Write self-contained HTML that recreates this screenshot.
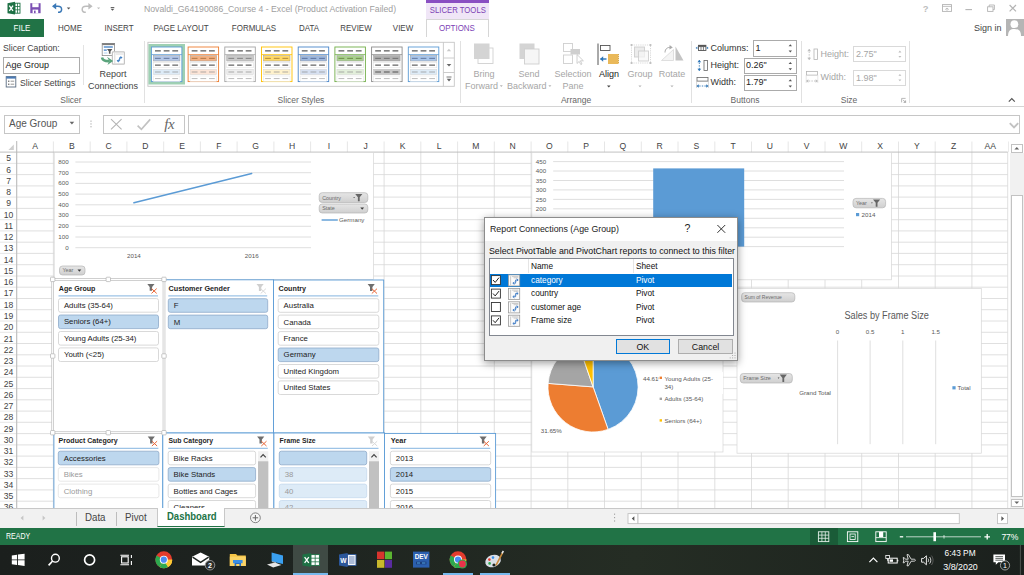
<!DOCTYPE html>
<html><head><meta charset="utf-8"><title>Excel</title>
<style>
*{box-sizing:border-box;margin:0;padding:0}
html,body{width:1024px;height:575px;overflow:hidden;background:#fff;font-family:"Liberation Sans",sans-serif;font-size:9px;color:#444}
.a{position:absolute}
.t{position:absolute;white-space:nowrap;line-height:1}
#title{left:0;top:0;width:1024px;height:19px;background:#fff}
#tabs{left:0;top:19px;width:1024px;height:18px;background:#fff}
#ribbon{left:0;top:37px;width:1024px;height:70px;background:#fff;border-bottom:1px solid #d4d4d4}
#fbar{left:0;top:107px;width:1024px;height:33px;background:#fff}
#grid{left:0;top:140px;width:1024px;height:368px;background:#fff;overflow:hidden}
#sheetbar{left:0;top:508px;width:1024px;height:20px;background:#f1f1f1}
#status{left:0;top:528px;width:1024px;height:17px;background:#217346}
#task{left:0;top:545px;width:1024px;height:30px;background:linear-gradient(90deg,#1b1f1d 0%,#1e2420 30%,#252d24 62%,#1f2620 85%,#1b201d 100%)}
.tab{position:absolute;top:19px;height:18px;line-height:18px;font-size:9.4px;color:#444;text-align:center;transform:scaleX(.85)}
.rl{position:absolute;font-size:9px;color:#444;white-space:nowrap;line-height:1}
.gl{position:absolute;font-size:8.5px;color:#666;white-space:nowrap;text-align:center;line-height:1}
.dl{transform:scaleX(.94);transform-origin:0 0}
.sep{position:absolute;top:41px;width:1px;height:62px;background:#e1e1e1}
</style></head><body>
<!--TITLE-->
<div id="title" class="a">
<svg class="a" style="left:0;top:0" width="130" height="19" viewBox="0 0 130 19">
<!-- excel icon -->
<path d="M7.5 3.2 L15 1.8 V14.6 L7.5 13.2Z" fill="#1e7145"/>
<rect x="15" y="3.2" width="5" height="10" fill="#fff" stroke="#1e7145" stroke-width="0.9"/>
<path d="M15 6.5H20M15 9.8H20M17.5 3.2V13.2" stroke="#1e7145" stroke-width="0.8"/>
<path d="M9.3 5.6 L13 10.9 M13 5.6 L9.3 10.9" stroke="#fff" stroke-width="1.3"/>
<!-- save -->
<path d="M30.3 3.2 H40.6 V13.2 H30.3Z" fill="#7b4fb3"/>
<rect x="32.3" y="3.2" width="6.3" height="4" fill="#fff"/>
<rect x="32.6" y="9.6" width="5.6" height="3.6" fill="#fff"/>
<rect x="34" y="10.6" width="1.6" height="2.6" fill="#7b4fb3"/>
<!-- undo -->
<path d="M53 6.3 H57.8 C60.6 6.3 61.6 8 61.6 9.4 C61.6 11 60.4 12.3 58 12.3" fill="none" stroke="#3b79b7" stroke-width="1.5"/>
<path d="M52 6.3 L56.2 3 V9.6Z" fill="#3b79b7"/>
<path d="M66.8 7.4 H70.4 L68.6 9.4Z" fill="#555"/>
<!-- redo -->
<path d="M90.5 6.3 H86 C83.2 6.3 82.2 8 82.2 9.4 C82.2 11 83.4 12.3 85.8 12.3" fill="none" stroke="#bdbdbd" stroke-width="1.5"/>
<path d="M92.6 6.3 L88.4 3 V9.6Z" fill="#bdbdbd"/>
<path d="M97 7.4 H100.2 L98.6 9.2Z" fill="#bdbdbd"/>
<!-- customize -->
<rect x="110.7" y="7" width="3.6" height="0.9" fill="#555"/>
<path d="M110.6 8.8 H114.4 L112.5 10.8Z" fill="#555"/>
</svg>
<div class="t" style="left:144px;top:5px;font-size:8.7px;color:#a0a0a0">Novaldi_G64190086_Course 4 - Excel (Product Activation Failed)</div>
<div class="a" style="left:426px;top:0;width:63px;height:19px;background:#f0e6f7;border-top:3px solid #8a4fc2"></div>
<div class="t" style="left:426px;width:63px;text-align:center;top:6px;font-size:8.8px;color:#7c3fb5;transform:scaleX(.88)">SLICER TOOLS</div>
<div class="t" style="left:922.8px;top:3.6px;font-size:9.4px;color:#bdbdbd;font-weight:bold">?</div>
<svg class="a" style="left:935px;top:0" width="89" height="19" viewBox="935 0 89 19">
<rect x="942.5" y="4.6" width="9" height="6.8" fill="none" stroke="#b4b4b4" stroke-width="0.9"/><path d="M942.5 6.4H951.5" stroke="#b4b4b4" stroke-width="0.8"/><path d="M945.2 9.6L947 8L948.8 9.6M947 8V10.8" fill="none" stroke="#b4b4b4" stroke-width="0.8"/>
<path d="M965.4 9.6H972" stroke="#b4b4b4" stroke-width="1.1"/>
<rect x="987.6" y="6.8" width="5.4" height="4.6" fill="none" stroke="#b4b4b4" stroke-width="0.9"/><path d="M989.2 6.8V5H994.4V9.6H993" fill="none" stroke="#b4b4b4" stroke-width="0.9"/>
<path d="M1009.6 5L1016 11.4M1016 5L1009.6 11.4" stroke="#b4b4b4" stroke-width="1.2"/>
</svg>
</div>
<!--TABS-->
<div id="tabs" class="a">
<div class="a" style="left:0;top:0;width:44px;height:18px;background:#217346"></div>
<div class="a" style="left:0;top:18px;width:1024px;height:1px;background:#d6d6d6"></div>
<div class="a" style="left:426px;top:0;width:63px;height:19px;background:#fff;border:1px solid #d6d6d6;border-bottom:none"></div>
</div>
<div class="tab" style="left:-18px;width:80px;color:#fff">FILE</div>
<div class="tab" style="left:29.5px;width:80px">HOME</div>
<div class="tab" style="left:78.5px;width:80px">INSERT</div>
<div class="tab" style="left:141px;width:80px">PAGE LAYOUT</div>
<div class="tab" style="left:213.5px;width:80px">FORMULAS</div>
<div class="tab" style="left:269.2px;width:80px">DATA</div>
<div class="tab" style="left:315.8px;width:80px">REVIEW</div>
<div class="tab" style="left:363.2px;width:80px">VIEW</div>
<div class="tab" style="left:417px;width:80px;color:#7c3fb5">OPTIONS</div>
<div class="t" style="left:973.6px;top:23px;font-size:9.4px;color:#444;transform:scaleX(.96);transform-origin:0 0">Sign in</div>
<div class="a" style="left:1006px;top:19px;width:18px;height:17px;background:#b5b5b5"></div>
<svg class="a" style="left:1006px;top:19px" width="18" height="17" viewBox="0 0 18 17"><circle cx="8.4" cy="5.2" r="3.9" fill="#fff"/><path d="M2 17 C2 11.6 4.4 10 8.4 10 C12.4 10 15 11.6 15 17Z" fill="#fff"/></svg>
<!--RIBBON-->
<div id="ribbon" class="a"></div>
<svg class="a" style="left:0;top:0" width="470" height="107" viewBox="0 0 470 107">
<rect x="147.9" y="42.3" width="306.4" height="44" fill="#fff" stroke="#c6c6c6" stroke-width="0.9"/>
<rect x="148.4" y="44" width="36.6" height="40.5" fill="#9fd0b3"/>
<rect x="151.4" y="47.0" width="30.5" height="34.6" fill="#fff" stroke="#5b9bd5" stroke-width="0.9"/>
<path d="M151.4 54.6H181.9" stroke="#5b9bd5" stroke-width="0.8"/>
<rect x="155.0" y="50.45" width="5.8" height="0.9" fill="#1c1c1c"/>
<rect x="163.7" y="50.45" width="5.8" height="0.9" fill="#1c1c1c"/>
<rect x="172.3" y="50.45" width="5.8" height="0.9" fill="#1c1c1c"/>
<rect x="153.4" y="55.6" width="26.5" height="5.4" fill="#b4c7e7" stroke="#9a9a9a" stroke-width="0.5"/>
<rect x="155.0" y="57.85" width="5.8" height="0.9" fill="#5a6f96"/>
<rect x="163.7" y="57.85" width="5.8" height="0.9" fill="#5a6f96"/>
<rect x="172.3" y="57.85" width="5.8" height="0.9" fill="#5a6f96"/>
<rect x="153.4" y="62.4" width="26.5" height="5.4" fill="#fff" stroke="#dcdcdc" stroke-width="0.5"/>
<rect x="155.0" y="64.65" width="5.8" height="0.9" fill="#2a2a2a"/>
<rect x="163.7" y="64.65" width="5.8" height="0.9" fill="#2a2a2a"/>
<rect x="172.3" y="64.65" width="5.8" height="0.9" fill="#2a2a2a"/>
<rect x="153.4" y="69.3" width="26.5" height="5.4" fill="#ddebf7" stroke="#d5d5d5" stroke-width="0.5"/>
<rect x="155.0" y="71.65" width="5.8" height="0.7" fill="#8f8f8f"/>
<rect x="163.7" y="71.65" width="5.8" height="0.7" fill="#8f8f8f"/>
<rect x="172.3" y="71.65" width="5.8" height="0.7" fill="#8f8f8f"/>
<rect x="153.4" y="76.0" width="26.5" height="5.4" fill="#fff" stroke="#e4e4e4" stroke-width="0.5"/>
<rect x="155.0" y="78.35" width="5.8" height="0.7" fill="#a0a0a0"/>
<rect x="163.7" y="78.35" width="5.8" height="0.7" fill="#a0a0a0"/>
<rect x="172.3" y="78.35" width="5.8" height="0.7" fill="#a0a0a0"/>
<rect x="188.1" y="47.0" width="30.5" height="34.6" fill="#fff" stroke="#ed7d31" stroke-width="0.9"/>
<path d="M188.1 54.6H218.6" stroke="#ed7d31" stroke-width="0.8"/>
<rect x="191.7" y="50.45" width="5.8" height="0.9" fill="#1c1c1c"/>
<rect x="200.4" y="50.45" width="5.8" height="0.9" fill="#1c1c1c"/>
<rect x="209.0" y="50.45" width="5.8" height="0.9" fill="#1c1c1c"/>
<rect x="190.1" y="55.6" width="26.5" height="5.4" fill="#f4b183" stroke="#9a9a9a" stroke-width="0.5"/>
<rect x="191.7" y="57.85" width="5.8" height="0.9" fill="#a8703f"/>
<rect x="200.4" y="57.85" width="5.8" height="0.9" fill="#a8703f"/>
<rect x="209.0" y="57.85" width="5.8" height="0.9" fill="#a8703f"/>
<rect x="190.1" y="62.4" width="26.5" height="5.4" fill="#fff" stroke="#dcdcdc" stroke-width="0.5"/>
<rect x="191.7" y="64.65" width="5.8" height="0.9" fill="#2a2a2a"/>
<rect x="200.4" y="64.65" width="5.8" height="0.9" fill="#2a2a2a"/>
<rect x="209.0" y="64.65" width="5.8" height="0.9" fill="#2a2a2a"/>
<rect x="190.1" y="69.3" width="26.5" height="5.4" fill="#fce4d6" stroke="#d5d5d5" stroke-width="0.5"/>
<rect x="191.7" y="71.65" width="5.8" height="0.7" fill="#8f8f8f"/>
<rect x="200.4" y="71.65" width="5.8" height="0.7" fill="#8f8f8f"/>
<rect x="209.0" y="71.65" width="5.8" height="0.7" fill="#8f8f8f"/>
<rect x="190.1" y="76.0" width="26.5" height="5.4" fill="#fff" stroke="#e4e4e4" stroke-width="0.5"/>
<rect x="191.7" y="78.35" width="5.8" height="0.7" fill="#a0a0a0"/>
<rect x="200.4" y="78.35" width="5.8" height="0.7" fill="#a0a0a0"/>
<rect x="209.0" y="78.35" width="5.8" height="0.7" fill="#a0a0a0"/>
<rect x="224.8" y="47.0" width="30.5" height="34.6" fill="#fff" stroke="#a5a5a5" stroke-width="0.9"/>
<path d="M224.8 54.6H255.3" stroke="#a5a5a5" stroke-width="0.8"/>
<rect x="228.4" y="50.45" width="5.8" height="0.9" fill="#1c1c1c"/>
<rect x="237.1" y="50.45" width="5.8" height="0.9" fill="#1c1c1c"/>
<rect x="245.7" y="50.45" width="5.8" height="0.9" fill="#1c1c1c"/>
<rect x="226.8" y="55.6" width="26.5" height="5.4" fill="#c9c9c9" stroke="#9a9a9a" stroke-width="0.5"/>
<rect x="228.4" y="57.85" width="5.8" height="0.9" fill="#7a7a7a"/>
<rect x="237.1" y="57.85" width="5.8" height="0.9" fill="#7a7a7a"/>
<rect x="245.7" y="57.85" width="5.8" height="0.9" fill="#7a7a7a"/>
<rect x="226.8" y="62.4" width="26.5" height="5.4" fill="#fff" stroke="#dcdcdc" stroke-width="0.5"/>
<rect x="228.4" y="64.65" width="5.8" height="0.9" fill="#2a2a2a"/>
<rect x="237.1" y="64.65" width="5.8" height="0.9" fill="#2a2a2a"/>
<rect x="245.7" y="64.65" width="5.8" height="0.9" fill="#2a2a2a"/>
<rect x="226.8" y="69.3" width="26.5" height="5.4" fill="#ededed" stroke="#d5d5d5" stroke-width="0.5"/>
<rect x="228.4" y="71.65" width="5.8" height="0.7" fill="#8f8f8f"/>
<rect x="237.1" y="71.65" width="5.8" height="0.7" fill="#8f8f8f"/>
<rect x="245.7" y="71.65" width="5.8" height="0.7" fill="#8f8f8f"/>
<rect x="226.8" y="76.0" width="26.5" height="5.4" fill="#fff" stroke="#e4e4e4" stroke-width="0.5"/>
<rect x="228.4" y="78.35" width="5.8" height="0.7" fill="#a0a0a0"/>
<rect x="237.1" y="78.35" width="5.8" height="0.7" fill="#a0a0a0"/>
<rect x="245.7" y="78.35" width="5.8" height="0.7" fill="#a0a0a0"/>
<rect x="261.5" y="47.0" width="30.5" height="34.6" fill="#fff" stroke="#ffc000" stroke-width="0.9"/>
<path d="M261.5 54.6H292.0" stroke="#ffc000" stroke-width="0.8"/>
<rect x="265.1" y="50.45" width="5.8" height="0.9" fill="#1c1c1c"/>
<rect x="273.8" y="50.45" width="5.8" height="0.9" fill="#1c1c1c"/>
<rect x="282.4" y="50.45" width="5.8" height="0.9" fill="#1c1c1c"/>
<rect x="263.5" y="55.6" width="26.5" height="5.4" fill="#ffd966" stroke="#9a9a9a" stroke-width="0.5"/>
<rect x="265.1" y="57.85" width="5.8" height="0.9" fill="#a8803a"/>
<rect x="273.8" y="57.85" width="5.8" height="0.9" fill="#a8803a"/>
<rect x="282.4" y="57.85" width="5.8" height="0.9" fill="#a8803a"/>
<rect x="263.5" y="62.4" width="26.5" height="5.4" fill="#fff" stroke="#dcdcdc" stroke-width="0.5"/>
<rect x="265.1" y="64.65" width="5.8" height="0.9" fill="#2a2a2a"/>
<rect x="273.8" y="64.65" width="5.8" height="0.9" fill="#2a2a2a"/>
<rect x="282.4" y="64.65" width="5.8" height="0.9" fill="#2a2a2a"/>
<rect x="263.5" y="69.3" width="26.5" height="5.4" fill="#fff2cc" stroke="#d5d5d5" stroke-width="0.5"/>
<rect x="265.1" y="71.65" width="5.8" height="0.7" fill="#8f8f8f"/>
<rect x="273.8" y="71.65" width="5.8" height="0.7" fill="#8f8f8f"/>
<rect x="282.4" y="71.65" width="5.8" height="0.7" fill="#8f8f8f"/>
<rect x="263.5" y="76.0" width="26.5" height="5.4" fill="#fff" stroke="#e4e4e4" stroke-width="0.5"/>
<rect x="265.1" y="78.35" width="5.8" height="0.7" fill="#a0a0a0"/>
<rect x="273.8" y="78.35" width="5.8" height="0.7" fill="#a0a0a0"/>
<rect x="282.4" y="78.35" width="5.8" height="0.7" fill="#a0a0a0"/>
<rect x="298.2" y="47.0" width="30.5" height="34.6" fill="#fff" stroke="#4a86c9" stroke-width="0.9"/>
<path d="M298.2 54.6H328.7" stroke="#4a86c9" stroke-width="0.8"/>
<rect x="301.8" y="50.45" width="5.8" height="0.9" fill="#1c1c1c"/>
<rect x="310.5" y="50.45" width="5.8" height="0.9" fill="#1c1c1c"/>
<rect x="319.1" y="50.45" width="5.8" height="0.9" fill="#1c1c1c"/>
<rect x="300.2" y="55.6" width="26.5" height="5.4" fill="#9db7dd" stroke="#9a9a9a" stroke-width="0.5"/>
<rect x="301.8" y="57.85" width="5.8" height="0.9" fill="#536a95"/>
<rect x="310.5" y="57.85" width="5.8" height="0.9" fill="#536a95"/>
<rect x="319.1" y="57.85" width="5.8" height="0.9" fill="#536a95"/>
<rect x="300.2" y="62.4" width="26.5" height="5.4" fill="#fff" stroke="#dcdcdc" stroke-width="0.5"/>
<rect x="301.8" y="64.65" width="5.8" height="0.9" fill="#2a2a2a"/>
<rect x="310.5" y="64.65" width="5.8" height="0.9" fill="#2a2a2a"/>
<rect x="319.1" y="64.65" width="5.8" height="0.9" fill="#2a2a2a"/>
<rect x="300.2" y="69.3" width="26.5" height="5.4" fill="#d6e0f1" stroke="#d5d5d5" stroke-width="0.5"/>
<rect x="301.8" y="71.65" width="5.8" height="0.7" fill="#8f8f8f"/>
<rect x="310.5" y="71.65" width="5.8" height="0.7" fill="#8f8f8f"/>
<rect x="319.1" y="71.65" width="5.8" height="0.7" fill="#8f8f8f"/>
<rect x="300.2" y="76.0" width="26.5" height="5.4" fill="#fff" stroke="#e4e4e4" stroke-width="0.5"/>
<rect x="301.8" y="78.35" width="5.8" height="0.7" fill="#a0a0a0"/>
<rect x="310.5" y="78.35" width="5.8" height="0.7" fill="#a0a0a0"/>
<rect x="319.1" y="78.35" width="5.8" height="0.7" fill="#a0a0a0"/>
<rect x="334.9" y="47.0" width="30.5" height="34.6" fill="#fff" stroke="#70ad47" stroke-width="0.9"/>
<path d="M334.9 54.6H365.4" stroke="#70ad47" stroke-width="0.8"/>
<rect x="338.5" y="50.45" width="5.8" height="0.9" fill="#1c1c1c"/>
<rect x="347.2" y="50.45" width="5.8" height="0.9" fill="#1c1c1c"/>
<rect x="355.8" y="50.45" width="5.8" height="0.9" fill="#1c1c1c"/>
<rect x="336.9" y="55.6" width="26.5" height="5.4" fill="#a9d08e" stroke="#9a9a9a" stroke-width="0.5"/>
<rect x="338.5" y="57.85" width="5.8" height="0.9" fill="#66843f"/>
<rect x="347.2" y="57.85" width="5.8" height="0.9" fill="#66843f"/>
<rect x="355.8" y="57.85" width="5.8" height="0.9" fill="#66843f"/>
<rect x="336.9" y="62.4" width="26.5" height="5.4" fill="#fff" stroke="#dcdcdc" stroke-width="0.5"/>
<rect x="338.5" y="64.65" width="5.8" height="0.9" fill="#2a2a2a"/>
<rect x="347.2" y="64.65" width="5.8" height="0.9" fill="#2a2a2a"/>
<rect x="355.8" y="64.65" width="5.8" height="0.9" fill="#2a2a2a"/>
<rect x="336.9" y="69.3" width="26.5" height="5.4" fill="#e2efda" stroke="#d5d5d5" stroke-width="0.5"/>
<rect x="338.5" y="71.65" width="5.8" height="0.7" fill="#8f8f8f"/>
<rect x="347.2" y="71.65" width="5.8" height="0.7" fill="#8f8f8f"/>
<rect x="355.8" y="71.65" width="5.8" height="0.7" fill="#8f8f8f"/>
<rect x="336.9" y="76.0" width="26.5" height="5.4" fill="#fff" stroke="#e4e4e4" stroke-width="0.5"/>
<rect x="338.5" y="78.35" width="5.8" height="0.7" fill="#a0a0a0"/>
<rect x="347.2" y="78.35" width="5.8" height="0.7" fill="#a0a0a0"/>
<rect x="355.8" y="78.35" width="5.8" height="0.7" fill="#a0a0a0"/>
<rect x="371.6" y="47.0" width="30.5" height="34.6" fill="#fff" stroke="#8c8c8c" stroke-width="0.9"/>
<path d="M371.6 54.6H402.1" stroke="#8c8c8c" stroke-width="0.8"/>
<rect x="375.2" y="50.45" width="5.8" height="0.9" fill="#1c1c1c"/>
<rect x="383.9" y="50.45" width="5.8" height="0.9" fill="#1c1c1c"/>
<rect x="392.5" y="50.45" width="5.8" height="0.9" fill="#1c1c1c"/>
<rect x="373.6" y="55.6" width="26.5" height="5.4" fill="#b0b0b0" stroke="#9a9a9a" stroke-width="0.5"/>
<rect x="375.2" y="57.85" width="5.8" height="0.9" fill="#6a6a6a"/>
<rect x="383.9" y="57.85" width="5.8" height="0.9" fill="#6a6a6a"/>
<rect x="392.5" y="57.85" width="5.8" height="0.9" fill="#6a6a6a"/>
<rect x="373.6" y="62.4" width="26.5" height="5.4" fill="#fff" stroke="#dcdcdc" stroke-width="0.5"/>
<rect x="375.2" y="64.65" width="5.8" height="0.9" fill="#2a2a2a"/>
<rect x="383.9" y="64.65" width="5.8" height="0.9" fill="#2a2a2a"/>
<rect x="392.5" y="64.65" width="5.8" height="0.9" fill="#2a2a2a"/>
<rect x="373.6" y="69.3" width="26.5" height="5.4" fill="#c8c8c8" stroke="#bbb" stroke-width="0.5"/>
<rect x="375.2" y="71.65" width="5.8" height="0.7" fill="#222"/>
<rect x="383.9" y="71.65" width="5.8" height="0.7" fill="#222"/>
<rect x="392.5" y="71.65" width="5.8" height="0.7" fill="#222"/>
<rect x="373.6" y="76.0" width="26.5" height="5.4" fill="#fff" stroke="#e4e4e4" stroke-width="0.5"/>
<rect x="375.2" y="78.35" width="5.8" height="0.7" fill="#a0a0a0"/>
<rect x="383.9" y="78.35" width="5.8" height="0.7" fill="#a0a0a0"/>
<rect x="392.5" y="78.35" width="5.8" height="0.7" fill="#a0a0a0"/>
<rect x="408.3" y="47.0" width="30.5" height="34.6" fill="#fff" stroke="#5b9bd5" stroke-width="0.9"/>
<path d="M408.3 54.6H438.8" stroke="#5b9bd5" stroke-width="0.8"/>
<rect x="411.9" y="50.45" width="5.8" height="0.9" fill="#1c1c1c"/>
<rect x="420.6" y="50.45" width="5.8" height="0.9" fill="#1c1c1c"/>
<rect x="429.2" y="50.45" width="5.8" height="0.9" fill="#1c1c1c"/>
<rect x="410.3" y="55.6" width="26.5" height="5.4" fill="#a9c6ea" stroke="#9a9a9a" stroke-width="0.5"/>
<rect x="411.9" y="57.85" width="5.8" height="0.9" fill="#5a6f96"/>
<rect x="420.6" y="57.85" width="5.8" height="0.9" fill="#5a6f96"/>
<rect x="429.2" y="57.85" width="5.8" height="0.9" fill="#5a6f96"/>
<rect x="410.3" y="62.4" width="26.5" height="5.4" fill="#fff" stroke="#dcdcdc" stroke-width="0.5"/>
<rect x="411.9" y="64.65" width="5.8" height="0.9" fill="#2a2a2a"/>
<rect x="420.6" y="64.65" width="5.8" height="0.9" fill="#2a2a2a"/>
<rect x="429.2" y="64.65" width="5.8" height="0.9" fill="#2a2a2a"/>
<rect x="410.3" y="69.3" width="26.5" height="5.4" fill="#ddebf7" stroke="#d5d5d5" stroke-width="0.5"/>
<rect x="411.9" y="71.65" width="5.8" height="0.7" fill="#8f8f8f"/>
<rect x="420.6" y="71.65" width="5.8" height="0.7" fill="#8f8f8f"/>
<rect x="429.2" y="71.65" width="5.8" height="0.7" fill="#8f8f8f"/>
<rect x="410.3" y="76.0" width="26.5" height="5.4" fill="#fff" stroke="#e4e4e4" stroke-width="0.5"/>
<rect x="411.9" y="78.35" width="5.8" height="0.7" fill="#a0a0a0"/>
<rect x="420.6" y="78.35" width="5.8" height="0.7" fill="#a0a0a0"/>
<rect x="429.2" y="78.35" width="5.8" height="0.7" fill="#a0a0a0"/>
<path d="M443.4 42.3V86.3M443.4 58H454.3M443.4 72.5H454.3" stroke="#c6c6c6" stroke-width="0.9" fill="none"/>
<path d="M446.7 51.2H451.1L448.9 48.8Z" fill="#c8c8c8"/>
<path d="M446.7 64H451.3L449 66.6Z" fill="#666"/>
<path d="M446.5 77H451.5" stroke="#666" stroke-width="0.9"/><path d="M446.7 78.8H451.3L449 81.4Z" fill="#666"/>
</svg>
<div class="rl" style="left:3px;top:44px;color:#444;transform:scaleX(.97);transform-origin:0 0">Slicer Caption:</div>
<div class="a" style="left:3px;top:57px;width:77px;height:16.5px;border:1px solid #ababab;background:#fff"></div>
<div class="rl" style="left:5.5px;top:61px;color:#222">Age Group</div>
<svg class="a" style="left:5px;top:75px" width="13" height="14" viewBox="0 0 13 14"><rect x="1.2" y="1.6" width="9.6" height="10.4" fill="#fff" stroke="#5a6b80" stroke-width="0.9"/><rect x="1.2" y="1.6" width="9.6" height="2" fill="#4a7ab5"/><path d="M3 6.2H4.4M3 9.2H4.4" stroke="#444" stroke-width="1"/><path d="M5.6 6.2H9.2M5.6 9.2H9.2" stroke="#8a8a8a" stroke-width="0.9"/></svg>
<div class="rl" style="left:19.5px;top:78.5px;color:#444;transform:scaleX(.96);transform-origin:0 0">Slicer Settings</div>
<div class="a" style="left:82.5px;top:45px;width:1px;height:40px;background:#e3e3e3"></div>
<svg class="a" style="left:98px;top:41px" width="30" height="26" viewBox="98 41 30 26">
<rect x="102.2" y="43.4" width="12.4" height="12.2" fill="#fff" stroke="#8c8c8c" stroke-width="0.8"/>
<rect x="102.2" y="43.2" width="12.4" height="1.9" fill="#7d7d7d"/>
<path d="M103.8 47H112.8" stroke="#3f7fc4" stroke-width="1.3"/><path d="M103.8 50.1H106.8" stroke="#3f7fc4" stroke-width="1.3"/><path d="M103.8 53H107.4" stroke="#b9d3ee" stroke-width="1.1"/>
<path d="M107 49.1H112.4L110.5 51.4V53.8H108.9V51.4Z" fill="#555"/>
<rect x="112.4" y="51.8" width="12" height="12.4" rx="0.8" fill="#fff" stroke="#c4c4c4" stroke-width="1.2"/>
<path d="M114.8 53V63.4M115.8 54H123.4" stroke="#d4d4d4" stroke-width="0.9"/>
<path d="M102 57.4C102.6 60.4 105 61.3 109.4 61.1" fill="none" stroke="#5aa47c" stroke-width="2.6"/><path d="M107 56.8L113.2 61L107.4 65L109.4 61Z" fill="#5aa47c"/>
<path d="M117.4 60.8H119.6V57.6H122" fill="none" stroke="#3f7fc4" stroke-width="1"/><path d="M120.4 56L122.6 57.6L120.4 59.2ZM118.8 59.2L116.6 60.8L118.8 62.4Z" fill="#3f7fc4"/>
</svg>
<div class="rl" style="left:88px;width:50px;text-align:center;top:69.5px">Report</div>
<div class="rl" style="left:83px;width:60px;text-align:center;top:81.5px">Connections</div>
<div class="gl" style="left:51px;width:40px;top:96px">Slicer</div>
<div class="sep" style="left:143.5px"></div>
<div class="gl" style="left:271px;width:60px;top:96px">Slicer Styles</div>
<div class="sep" style="left:459.5px"></div>
<!-- arrange -->
<svg class="a" style="left:460px;top:37px" width="232" height="70" viewBox="460 37 232 70">
<rect x="478" y="48" width="15" height="15.5" fill="#fff" stroke="#d0d0d0" stroke-width="0.9"/>
<rect x="474" y="43.5" width="15.5" height="15.5" fill="#d4d4d4"/>
<rect x="519.5" y="43.5" width="15" height="15.5" fill="#d4d4d4"/>
<rect x="524.5" y="49" width="14.5" height="15" fill="#f6f6f6" stroke="#cfcfcf" stroke-width="0.9"/>
<rect x="563.5" y="43.5" width="9" height="8" fill="#fff" stroke="#cfcfcf" stroke-width="0.9"/>
<rect x="563.5" y="55" width="9" height="8.5" fill="#fff" stroke="#cfcfcf" stroke-width="0.9"/>
<rect x="570.5" y="49" width="9.5" height="5.5" fill="#cfcfcf"/>
<path d="M577 54.5V63.5L579.2 61.4L580.8 64.6L582 64L580.4 60.8H583.4Z" fill="#fff" stroke="#c4c4c4" stroke-width="0.8"/>
<path d="M598 43.5V65" stroke="#555" stroke-width="1"/>
<rect x="600.5" y="45.5" width="9.5" height="5" fill="#fff" stroke="#555" stroke-width="0.9"/>
<rect x="608" y="54" width="10.5" height="10" fill="#eab95a"/>
<path d="M618.5 54V64" stroke="#c99a3a" stroke-width="0.8" stroke-dasharray="1 1"/>
<path d="M600.5 59H606.5" stroke="#2e75b6" stroke-width="1.4"/><path d="M600 59L603.2 56.2V61.8Z" fill="#2e75b6"/>
<rect x="631.5" y="45" width="19" height="18" fill="none" stroke="#cfcfcf" stroke-width="0.8" stroke-dasharray="1.2 1"/>
<rect x="634.5" y="47" width="10" height="10" fill="#ececec" stroke="#cfcfcf" stroke-width="0.9"/>
<rect x="638.5" y="51" width="10" height="10" fill="#f6f6f6" stroke="#cfcfcf" stroke-width="0.9" fill-opacity="0.7"/>
<rect x="630.6" y="44.1" width="1.8" height="1.8" fill="#bbb"/><rect x="649.6" y="44.1" width="1.8" height="1.8" fill="#bbb"/><rect x="630.6" y="62.1" width="1.8" height="1.8" fill="#bbb"/><rect x="649.6" y="62.1" width="1.8" height="1.8" fill="#bbb"/>
<path d="M661.5 60.5H673.5V49.5Z" fill="#f4f4f4" stroke="#d8d8d8" stroke-width="0.8"/>
<path d="M675.5 46.5V60.5H683.5Z" fill="#c4c4c4"/>
<path d="M665 52.5C665 48.5 668 47 671 47.4" fill="none" stroke="#aaa" stroke-width="1"/><path d="M669.6 45L672.8 47.6L669.4 49.6Z" fill="#aaa"/>
<path d="M499.8 85.2H502.8L501.3 86.9Z" fill="#b5b5b5"/>
<path d="M548.4 85.2H551.4L549.9 86.9Z" fill="#b5b5b5"/>
<path d="M607 85.4H610.6L608.8 87.4Z" fill="#444"/>
<path d="M638.4 85.4H641.6L640 87.2Z" fill="#b5b5b5"/>
<path d="M670.4 85.4H673.6L672 87.2Z" fill="#b5b5b5"/>
</svg>
<div class="rl" style="left:464px;width:40px;text-align:center;top:69.5px;color:#a6a6a6">Bring</div>
<div class="rl" style="left:465px;top:81.5px;color:#a6a6a6">Forward</div>
<div class="rl" style="left:509px;width:40px;text-align:center;top:69.5px;color:#a6a6a6">Send</div>
<div class="rl" style="left:507px;top:81.5px;color:#a6a6a6">Backward</div>
<div class="rl" style="left:548px;width:50px;text-align:center;top:69.5px;color:#a6a6a6">Selection</div>
<div class="rl" style="left:548px;width:50px;text-align:center;top:81.5px;color:#a6a6a6">Pane</div>
<div class="rl" style="left:589px;width:40px;text-align:center;top:69.5px;color:#222">Align</div>
<div class="rl" style="left:620px;width:40px;text-align:center;top:69.5px;color:#a6a6a6">Group</div>
<div class="rl" style="left:652px;width:40px;text-align:center;top:69.5px;color:#a6a6a6">Rotate</div>
<div class="gl" style="left:546px;width:60px;top:96px">Arrange</div>
<div class="sep" style="left:690.5px"></div>
<!-- buttons -->
<svg class="a" style="left:693px;top:37px" width="20" height="70" viewBox="693 37 20 70">
<rect x="698.5" y="45.3" width="7.4" height="5.2" fill="#fff" stroke="#555" stroke-width="0.9"/><path d="M698.5 46.6H706M701 46.6V50.5M703.4 46.6V50.5" stroke="#555" stroke-width="0.8"/><rect x="698.5" y="45" width="7.4" height="1.6" fill="#555"/>
<path d="M695.6 47.9L697.4 46.6V49.2Z" fill="#2e75b6"/><path d="M708.6 47.9L706.8 46.6V49.2Z" fill="#2e75b6"/>
<rect x="704" y="60.5" width="3.4" height="10" fill="#fff" stroke="#666" stroke-width="0.8"/>
<path d="M699.3 60V71" stroke="#2e75b6" stroke-width="0.9" stroke-dasharray="1.4 1.2"/><path d="M697.4 62.2L699.3 60L701.2 62.2Z" fill="#2e75b6"/><path d="M697.4 68.8L699.3 71L701.2 68.8Z" fill="#2e75b6"/>
<rect x="697" y="77.5" width="11" height="3.6" fill="#fff" stroke="#666" stroke-width="0.8"/>
<path d="M696.6 86H708.4" stroke="#2e75b6" stroke-width="0.9" stroke-dasharray="1.4 1.2"/><path d="M698.8 84.2L696.6 86L698.8 87.8Z" fill="#2e75b6"/><path d="M706.2 84.2L708.4 86L706.2 87.8Z" fill="#2e75b6"/><path d="M696.6 81V88M708.4 81V88" stroke="#bbb" stroke-width="0.6"/>
</svg>
<div class="rl" style="left:710.5px;top:44px;color:#333">Columns:</div>
<div class="rl" style="left:710.5px;top:60.5px;color:#333">Height:</div>
<div class="rl" style="left:710.5px;top:77.5px;color:#333">Width:</div>
<div class="a" style="left:752.5px;top:39.5px;width:44px;height:17px;border:1px solid #ababab;background:#fff"></div>
<div class="a" style="left:743.5px;top:57.5px;width:53px;height:16.5px;border:1px solid #ababab;background:#fff"></div>
<div class="a" style="left:743.5px;top:74.5px;width:53px;height:16.5px;border:1px solid #ababab;background:#fff"></div>
<div class="rl" style="left:755.5px;top:44px;color:#222">1</div>
<div class="rl" style="left:746px;top:61px;color:#222">0.26"</div>
<div class="rl" style="left:746px;top:78px;color:#222">1.79"</div>
<svg class="a" style="left:786px;top:39px" width="10" height="52" viewBox="786 39 10 52">
<path d="M788.6 46.2H792L790.3 44.2Z M788.6 50.6H792L790.3 52.6Z M788.6 64H792L790.3 62Z M788.6 68.2H792L790.3 70.2Z M788.6 81.2H792L790.3 79.2Z M788.6 85.4H792L790.3 87.4Z" fill="#555"/></svg>
<div class="gl" style="left:715px;width:60px;top:96px">Buttons</div>
<div class="sep" style="left:800.5px"></div>
<!-- size -->
<svg class="a" style="left:803px;top:37px" width="20" height="70" viewBox="803 37 20 70">
<rect x="814" y="49" width="3.4" height="10.5" fill="#fff" stroke="#b5b5b5" stroke-width="0.8"/>
<path d="M809.2 49V60" stroke="#bdbdbd" stroke-width="0.9" stroke-dasharray="1.4 1.2"/><path d="M807.3 51.2L809.2 49L811.1 51.2Z" fill="#bdbdbd"/><path d="M807.3 57.8L809.2 60L811.1 57.8Z" fill="#bdbdbd"/>
<rect x="806.5" y="71.5" width="11" height="3.6" fill="#fff" stroke="#b5b5b5" stroke-width="0.8"/>
<path d="M806.2 81H817.8" stroke="#bdbdbd" stroke-width="0.9" stroke-dasharray="1.4 1.2"/><path d="M808.4 79.2L806.2 81L808.4 82.8Z" fill="#bdbdbd"/><path d="M815.6 79.2L817.8 81L815.6 82.8Z" fill="#bdbdbd"/><path d="M806.2 75V83M817.8 75V83" stroke="#d5d5d5" stroke-width="0.6"/>
</svg>
<div class="rl" style="left:820.5px;top:49.5px;color:#a6a6a6">Height:</div>
<div class="rl" style="left:820.5px;top:72.5px;color:#a6a6a6">Width:</div>
<div class="a" style="left:853px;top:46px;width:53px;height:16px;border:1px solid #d9d9d9;background:#fff"></div>
<div class="a" style="left:853px;top:69.5px;width:53px;height:16px;border:1px solid #d9d9d9;background:#fff"></div>
<div class="rl" style="left:856px;top:50px;color:#a6a6a6">2.75"</div>
<div class="rl" style="left:856px;top:73.5px;color:#a6a6a6">1.98"</div>
<svg class="a" style="left:895px;top:45px" width="12" height="62" viewBox="895 45 12 62">
<path d="M898.4 52.4H901.4L899.9 50.6Z M898.4 56H901.4L899.9 57.8Z M898.4 75.8H901.4L899.9 74Z M898.4 79.4H901.4L899.9 81.2Z" fill="#bdbdbd"/>
<path d="M901.6 102.4V98.4H905.6" fill="none" stroke="#aaa" stroke-width="0.8"/><path d="M903 99.8L905.6 102.4M905.6 100.4V102.4H903.6" fill="none" stroke="#999" stroke-width="0.8"/></svg>
<div class="gl" style="left:829px;width:40px;top:96px">Size</div>
<div class="sep" style="left:908.5px"></div>
<svg class="a" style="left:1006px;top:96px" width="12" height="8" viewBox="0 0 12 8"><path d="M2.8 5.6L5.8 2.6L8.8 5.6" fill="none" stroke="#555" stroke-width="1.2"/></svg>

<!--FBAR-->
<div id="fbar" class="a"></div>
<!--FBAR-CONTENT-->
<div class="a" style="left:4px;top:114.5px;width:76px;height:19px;border:1px solid #c6c6c6;background:#fff"></div>
<div class="t" style="left:9px;top:118.6px;font-size:10px;color:#555">Age Group</div>
<svg class="a" style="left:68px;top:119px" width="30" height="12" viewBox="68 119 30 12"><path d="M69.6 121.8H74.2L71.9 124.4Z" fill="#666"/><path d="M91 120.6v1.1M91 123.4v1.1M91 126.2v1.1" stroke="#999" stroke-width="1"/></svg>
<div class="a" style="left:103px;top:114.5px;width:81.5px;height:19px;border:1px solid #c6c6c6;background:#fff"></div>
<svg class="a" style="left:103px;top:114px" width="82" height="20" viewBox="103 114 82 20">
<path d="M111 119.2L121.6 129.4M121.6 119.2L111 129.4" stroke="#b5b5b5" stroke-width="1.1" fill="none"/>
<path d="M137.6 125.6L141.4 129.4L150.2 119.4" stroke="#c2c2c2" stroke-width="1.6" fill="none"/>
<text x="164.2" y="129.2" font-family="Liberation Serif, serif" font-style="italic" font-size="15" fill="#666" letter-spacing="-0.4">fx</text>
</svg>
<div class="a" style="left:187.5px;top:114.5px;width:832.5px;height:19px;border:1px solid #c6c6c6;background:#fff"></div>
<svg class="a" style="left:1004px;top:118px" width="18" height="14" viewBox="1004 118 18 14"><path d="M1009.8 123.2L1014 127.4L1018.2 123.2" stroke="#c2c2c2" stroke-width="1.9" fill="none"/></svg>

<!--GRID-->
<div id="grid" class="a"></div>
<svg class="a" style="left:0;top:140px" width="1024" height="368" viewBox="0 140 1024 368">
<path d="M16.7 152V508M53.4 152V508M90.2 152V508M126.9 152V508M163.7 152V508M200.4 152V508M237.1 152V508M273.9 152V508M310.6 152V508M347.4 152V508M384.1 152V508M420.8 152V508M457.6 152V508M494.3 152V508M531.1 152V508M567.8 152V508M604.5 152V508M641.3 152V508M678.0 152V508M714.8 152V508M751.5 152V508M788.2 152V508M825.0 152V508M861.7 152V508M898.5 152V508M935.2 152V508M971.9 152V508M1007.7 152V508M16.7 163.4H1007.7M16.7 174.6H1007.7M16.7 185.9H1007.7M16.7 197.1H1007.7M16.7 208.4H1007.7M16.7 219.7H1007.7M16.7 230.9H1007.7M16.7 242.2H1007.7M16.7 253.4H1007.7M16.7 264.7H1007.7M16.7 276.0H1007.7M16.7 287.2H1007.7M16.7 298.5H1007.7M16.7 309.7H1007.7M16.7 321.0H1007.7M16.7 332.3H1007.7M16.7 343.5H1007.7M16.7 354.8H1007.7M16.7 366.0H1007.7M16.7 377.3H1007.7M16.7 388.6H1007.7M16.7 399.8H1007.7M16.7 411.1H1007.7M16.7 422.3H1007.7M16.7 433.6H1007.7M16.7 444.9H1007.7M16.7 456.1H1007.7M16.7 467.4H1007.7M16.7 478.6H1007.7M16.7 489.9H1007.7M16.7 501.2H1007.7M16.7 512.4H1007.7" stroke="#d8d8d8" stroke-width="0.8" fill="none"/>
<path d="M16.7 141.5V152M53.4 141.5V152M90.2 141.5V152M126.9 141.5V152M163.7 141.5V152M200.4 141.5V152M237.1 141.5V152M273.9 141.5V152M310.6 141.5V152M347.4 141.5V152M384.1 141.5V152M420.8 141.5V152M457.6 141.5V152M494.3 141.5V152M531.1 141.5V152M567.8 141.5V152M604.5 141.5V152M641.3 141.5V152M678.0 141.5V152M714.8 141.5V152M751.5 141.5V152M788.2 141.5V152M825.0 141.5V152M861.7 141.5V152M898.5 141.5V152M935.2 141.5V152M971.9 141.5V152M1008.7 141.5V152" stroke="#e0e0e0" stroke-width="0.8" fill="none"/>
<path d="M0 163.4H16.7M0 174.6H16.7M0 185.9H16.7M0 197.1H16.7M0 208.4H16.7M0 219.7H16.7M0 230.9H16.7M0 242.2H16.7M0 253.4H16.7M0 264.7H16.7M0 276.0H16.7M0 287.2H16.7M0 298.5H16.7M0 309.7H16.7M0 321.0H16.7M0 332.3H16.7M0 343.5H16.7M0 354.8H16.7M0 366.0H16.7M0 377.3H16.7M0 388.6H16.7M0 399.8H16.7M0 411.1H16.7M0 422.3H16.7M0 433.6H16.7M0 444.9H16.7M0 456.1H16.7M0 467.4H16.7M0 478.6H16.7M0 489.9H16.7M0 501.2H16.7M0 512.4H16.7" stroke="#e0e0e0" stroke-width="0.8" fill="none"/>
<path d="M0 152.1H1007.7M16.7 141V508" stroke="#b8b8b8" stroke-width="0.9" fill="none"/>
<path d="M13.8 144.6V150H8.4Z" fill="#cfcfcf"/>
<text x="35.1" y="148.8" text-anchor="middle" font-size="8.6" fill="#444">A</text>
<text x="71.8" y="148.8" text-anchor="middle" font-size="8.6" fill="#444">B</text>
<text x="108.6" y="148.8" text-anchor="middle" font-size="8.6" fill="#444">C</text>
<text x="145.3" y="148.8" text-anchor="middle" font-size="8.6" fill="#444">D</text>
<text x="182.0" y="148.8" text-anchor="middle" font-size="8.6" fill="#444">E</text>
<text x="218.8" y="148.8" text-anchor="middle" font-size="8.6" fill="#444">F</text>
<text x="255.5" y="148.8" text-anchor="middle" font-size="8.6" fill="#444">G</text>
<text x="292.2" y="148.8" text-anchor="middle" font-size="8.6" fill="#444">H</text>
<text x="329.0" y="148.8" text-anchor="middle" font-size="8.6" fill="#444">I</text>
<text x="365.7" y="148.8" text-anchor="middle" font-size="8.6" fill="#444">J</text>
<text x="402.5" y="148.8" text-anchor="middle" font-size="8.6" fill="#444">K</text>
<text x="439.2" y="148.8" text-anchor="middle" font-size="8.6" fill="#444">L</text>
<text x="475.9" y="148.8" text-anchor="middle" font-size="8.6" fill="#444">M</text>
<text x="512.7" y="148.8" text-anchor="middle" font-size="8.6" fill="#444">N</text>
<text x="549.4" y="148.8" text-anchor="middle" font-size="8.6" fill="#444">O</text>
<text x="586.2" y="148.8" text-anchor="middle" font-size="8.6" fill="#444">P</text>
<text x="622.9" y="148.8" text-anchor="middle" font-size="8.6" fill="#444">Q</text>
<text x="659.7" y="148.8" text-anchor="middle" font-size="8.6" fill="#444">R</text>
<text x="696.4" y="148.8" text-anchor="middle" font-size="8.6" fill="#444">S</text>
<text x="733.1" y="148.8" text-anchor="middle" font-size="8.6" fill="#444">T</text>
<text x="769.9" y="148.8" text-anchor="middle" font-size="8.6" fill="#444">U</text>
<text x="806.6" y="148.8" text-anchor="middle" font-size="8.6" fill="#444">V</text>
<text x="843.4" y="148.8" text-anchor="middle" font-size="8.6" fill="#444">W</text>
<text x="880.1" y="148.8" text-anchor="middle" font-size="8.6" fill="#444">X</text>
<text x="916.8" y="148.8" text-anchor="middle" font-size="8.6" fill="#444">Y</text>
<text x="953.6" y="148.8" text-anchor="middle" font-size="8.6" fill="#444">Z</text>
<text x="990.3" y="148.8" text-anchor="middle" font-size="8.6" fill="#444">AA</text>
<text x="8.6" y="161.3" text-anchor="middle" font-size="8.6" fill="#444">5</text>
<text x="8.6" y="172.6" text-anchor="middle" font-size="8.6" fill="#444">6</text>
<text x="8.6" y="183.8" text-anchor="middle" font-size="8.6" fill="#444">7</text>
<text x="8.6" y="195.1" text-anchor="middle" font-size="8.6" fill="#444">8</text>
<text x="8.6" y="206.3" text-anchor="middle" font-size="8.6" fill="#444">9</text>
<text x="8.6" y="217.6" text-anchor="middle" font-size="8.6" fill="#444">10</text>
<text x="8.6" y="228.9" text-anchor="middle" font-size="8.6" fill="#444">11</text>
<text x="8.6" y="240.1" text-anchor="middle" font-size="8.6" fill="#444">12</text>
<text x="8.6" y="251.4" text-anchor="middle" font-size="8.6" fill="#444">13</text>
<text x="8.6" y="262.6" text-anchor="middle" font-size="8.6" fill="#444">14</text>
<text x="8.6" y="273.9" text-anchor="middle" font-size="8.6" fill="#444">15</text>
<text x="8.6" y="285.2" text-anchor="middle" font-size="8.6" fill="#444">16</text>
<text x="8.6" y="296.4" text-anchor="middle" font-size="8.6" fill="#444">17</text>
<text x="8.6" y="307.7" text-anchor="middle" font-size="8.6" fill="#444">18</text>
<text x="8.6" y="318.9" text-anchor="middle" font-size="8.6" fill="#444">19</text>
<text x="8.6" y="330.2" text-anchor="middle" font-size="8.6" fill="#444">20</text>
<text x="8.6" y="341.5" text-anchor="middle" font-size="8.6" fill="#444">21</text>
<text x="8.6" y="352.7" text-anchor="middle" font-size="8.6" fill="#444">22</text>
<text x="8.6" y="364.0" text-anchor="middle" font-size="8.6" fill="#444">23</text>
<text x="8.6" y="375.2" text-anchor="middle" font-size="8.6" fill="#444">24</text>
<text x="8.6" y="386.5" text-anchor="middle" font-size="8.6" fill="#444">25</text>
<text x="8.6" y="397.8" text-anchor="middle" font-size="8.6" fill="#444">26</text>
<text x="8.6" y="409.0" text-anchor="middle" font-size="8.6" fill="#444">27</text>
<text x="8.6" y="420.3" text-anchor="middle" font-size="8.6" fill="#444">28</text>
<text x="8.6" y="431.5" text-anchor="middle" font-size="8.6" fill="#444">29</text>
<text x="8.6" y="442.8" text-anchor="middle" font-size="8.6" fill="#444">30</text>
<text x="8.6" y="454.1" text-anchor="middle" font-size="8.6" fill="#444">31</text>
<text x="8.6" y="465.3" text-anchor="middle" font-size="8.6" fill="#444">32</text>
<text x="8.6" y="476.6" text-anchor="middle" font-size="8.6" fill="#444">33</text>
<text x="8.6" y="487.8" text-anchor="middle" font-size="8.6" fill="#444">34</text>
<text x="8.6" y="499.1" text-anchor="middle" font-size="8.6" fill="#444">35</text>
<text x="8.6" y="510.4" text-anchor="middle" font-size="8.6" fill="#444">36</text>
</svg>
<svg class="a" style="left:0;top:140px" width="1024" height="368" viewBox="0 140 1024 368" font-family="Liberation Sans, sans-serif">
<defs><linearGradient id="bg" x1="0" y1="0" x2="0" y2="1"><stop offset="0" stop-color="#e6e6e6"/><stop offset="1" stop-color="#cfcfcf"/></linearGradient></defs>
<rect x="54.2" y="152.6" width="319.3" height="127" fill="#fff" stroke="#d6d6d6" stroke-width="0.7"/>
<text x="68.6" y="163.8" text-anchor="end" font-size="6.2" fill="#595959">800</text>
<text x="68.6" y="174.5" text-anchor="end" font-size="6.2" fill="#595959">700</text>
<text x="68.6" y="185.2" text-anchor="end" font-size="6.2" fill="#595959">600</text>
<text x="68.6" y="195.9" text-anchor="end" font-size="6.2" fill="#595959">500</text>
<text x="68.6" y="206.6" text-anchor="end" font-size="6.2" fill="#595959">400</text>
<text x="68.6" y="217.4" text-anchor="end" font-size="6.2" fill="#595959">300</text>
<text x="68.6" y="228.1" text-anchor="end" font-size="6.2" fill="#595959">200</text>
<text x="68.6" y="238.8" text-anchor="end" font-size="6.2" fill="#595959">100</text>
<text x="68.6" y="249.5" text-anchor="end" font-size="6.2" fill="#595959">0</text>
<path d="M75.4 162.0H311M75.4 172.7H311M75.4 183.4H311M75.4 194.1H311M75.4 204.8H311M75.4 215.6H311M75.4 226.3H311M75.4 237.0H311M75.4 247.7H311" stroke="#d6d6d6" stroke-width="0.8" fill="none"/>
<path d="M133.9 202.7L251.7 173.4" stroke="#5b9bd5" stroke-width="1.5" stroke-linecap="round"/>
<text x="133.9" y="257.8" text-anchor="middle" font-size="6.2" fill="#595959">2014</text>
<text x="251.7" y="257.8" text-anchor="middle" font-size="6.2" fill="#595959">2016</text>
<rect x="59.5" y="266" width="25.5" height="9.0" rx="3" fill="url(#bg)" stroke="#b4b4b4" stroke-width="0.7"/><text x="62.5" y="272.4" font-size="5.4" fill="#6a6a6a">Year</text><path d="M77.5 269.6H81.3L79.4 271.8Z" fill="#3a3a3a"/>
<rect x="319.2" y="192.7" width="48.6" height="9.8" rx="3" fill="url(#bg)" stroke="#b4b4b4" stroke-width="0.7"/><text x="322.2" y="199.5" font-size="5.4" fill="#6a6a6a">Country</text><path d="M355.2 194.0H362.4L359.7 197.2V201.2H357.9V197.2Z" fill="#666"/><path d="M353.2 197.0H355.0L354.1 198.1Z" fill="#444"/>
<rect x="319.2" y="204" width="48.6" height="9.0" rx="3" fill="url(#bg)" stroke="#b4b4b4" stroke-width="0.7"/><text x="322.2" y="210.4" font-size="5.4" fill="#6a6a6a">State</text><path d="M360.3 207.6H364.1L362.2 209.8Z" fill="#3a3a3a"/>
<path d="M321.6 220H337.8" stroke="#5b9bd5" stroke-width="1.4"/>
<text x="339" y="222.3" font-size="6.2" fill="#595959">Germany</text>
<rect x="531.8" y="152.6" width="359.6" height="127.2" fill="#fff" stroke="#d6d6d6" stroke-width="0.7"/>
<text x="546.2" y="163.9" text-anchor="end" font-size="6.2" fill="#595959">450</text>
<text x="546.2" y="173.3" text-anchor="end" font-size="6.2" fill="#595959">400</text>
<text x="546.2" y="182.8" text-anchor="end" font-size="6.2" fill="#595959">350</text>
<text x="546.2" y="192.2" text-anchor="end" font-size="6.2" fill="#595959">300</text>
<text x="546.2" y="201.7" text-anchor="end" font-size="6.2" fill="#595959">250</text>
<text x="546.2" y="211.2" text-anchor="end" font-size="6.2" fill="#595959">200</text>
<text x="546.2" y="220.6" text-anchor="end" font-size="6.2" fill="#595959">150</text>
<text x="546.2" y="230.1" text-anchor="end" font-size="6.2" fill="#595959">100</text>
<text x="546.2" y="239.5" text-anchor="end" font-size="6.2" fill="#595959">50</text>
<text x="546.2" y="248.9" text-anchor="end" font-size="6.2" fill="#595959">0</text>
<path d="M553.2 161.6H844M553.2 171.0H844M553.2 180.5H844M553.2 189.9H844M553.2 199.4H844M553.2 208.8H844M553.2 218.3H844M553.2 227.8H844M553.2 237.2H844M553.2 246.6H844" stroke="#d6d6d6" stroke-width="0.8" fill="none"/>
<rect x="653.2" y="168.4" width="91" height="78.2" fill="#5b9bd5"/>
<text x="698" y="257" text-anchor="middle" font-size="6.2" fill="#595959">Germany</text>
<rect x="853" y="198.4" width="32.6" height="9.4" rx="3" fill="url(#bg)" stroke="#b4b4b4" stroke-width="0.7"/><text x="856" y="205.0" font-size="5.4" fill="#6a6a6a">Year</text><path d="M873.0 199.5H880.2L877.5 202.7V206.7H875.7V202.7Z" fill="#666"/><path d="M871.0 202.5H872.8L871.9 203.6Z" fill="#444"/>
<rect x="856" y="213" width="3.2" height="3.2" fill="#5b9bd5"/>
<text x="861.6" y="216.8" font-size="6.2" fill="#595959">2014</text>
<rect x="531.8" y="288.4" width="191.2" height="163.6" fill="#fff" stroke="#d6d6d6" stroke-width="0.7"/>
<path d="M593.1 386.9L593.1 341.8A45.1 45.1 0 0 1 608.1 429.4Z" fill="#5b9bd5" stroke="#fff" stroke-width="0.8"/>
<path d="M593.1 386.9L608.1 429.4A45.1 45.1 0 0 1 548.1 383.4Z" fill="#ed7d31" stroke="#fff" stroke-width="0.8"/>
<path d="M593.1 386.9L548.1 383.4A45.1 45.1 0 0 1 578.4 344.3Z" fill="#a5a5a5" stroke="#fff" stroke-width="0.8"/>
<path d="M593.1 386.9L578.4 344.3A45.1 45.1 0 0 1 593.1 341.8Z" fill="#ffc000" stroke="#fff" stroke-width="0.8"/>
<text x="643" y="381" font-size="6.2" fill="#555">44.61%</text>
<rect x="659" y="372" width="64" height="22" fill="#fff"/>
<text x="540.8" y="433" font-size="6.2" fill="#555">31.65%</text>
<rect x="659.6" y="376.6" width="2.4" height="2.4" fill="#ed7d31"/>
<text x="664.4" y="380.6" font-size="6.2" fill="#595959">Young Adults (25-</text>
<text x="664.4" y="389" font-size="6.2" fill="#595959">34)</text>
<rect x="659.6" y="397.6" width="2.4" height="2.4" fill="#a5a5a5"/>
<text x="664.4" y="401.4" font-size="6.2" fill="#595959">Adults (35-64)</text>
<rect x="659.6" y="419.2" width="2.4" height="2.4" fill="#ffc000"/>
<text x="664.4" y="423" font-size="6.2" fill="#595959">Seniors (64+)</text>
<rect x="737" y="288.4" width="244.3" height="164.8" fill="#fff" stroke="#d6d6d6" stroke-width="0.7"/>
<rect x="741.6" y="292.7" width="53.2" height="9.3" rx="3" fill="url(#bg)" stroke="#b4b4b4" stroke-width="0.7"/><text x="744.6" y="299.2" font-size="5.0" fill="#6a6a6a">Sum of Revenue</text>
<text x="886.7" y="319" text-anchor="middle" font-size="10" fill="#595959" textLength="84.5" lengthAdjust="spacingAndGlyphs">Sales by Frame Size</text>
<text x="837.6" y="334.1" text-anchor="middle" font-size="6.2" fill="#595959">0</text>
<text x="870.1" y="334.1" text-anchor="middle" font-size="6.2" fill="#595959">0.5</text>
<text x="902.8" y="334.1" text-anchor="middle" font-size="6.2" fill="#595959">1</text>
<text x="935.7" y="334.1" text-anchor="middle" font-size="6.2" fill="#595959">1.5</text>
<path d="M837.6 340.5V444.2M870.1 340.5V444.2M902.8 340.5V444.2M935.7 340.5V444.2" stroke="#d6d6d6" stroke-width="0.8" fill="none"/>
<rect x="740.3" y="373.5" width="52.0" height="9.5" rx="3" fill="url(#bg)" stroke="#b4b4b4" stroke-width="0.7"/><text x="743.3" y="380.1" font-size="5.4" fill="#6a6a6a">Frame Size</text><path d="M779.7 374.6H786.9L784.2 377.9V381.9H782.4V377.9Z" fill="#666"/><path d="M777.7 377.6H779.5L778.6 378.8Z" fill="#444"/>
<text x="831" y="394.6" text-anchor="end" font-size="6.2" fill="#595959">Grand Total</text>
<rect x="952.4" y="386.2" width="3.2" height="3.2" fill="#5b9bd5"/>
<text x="957.6" y="390.1" font-size="6.2" fill="#595959">Total</text>
</svg>
<svg class="a" style="left:0;top:140px" width="1024" height="368" viewBox="0 140 1024 368" font-family="Liberation Sans, sans-serif">
<rect x="53.9" y="432.8" width="108.9" height="87.2" fill="#fff"/>
<rect x="53.9" y="432.8" width="108.9" height="87.2" fill="none" stroke="#5b9bd5" stroke-width="0.9"/>
<text x="58.6" y="443.1" font-size="7.4" font-weight="bold" fill="#1f1f1f" textLength="59.2" lengthAdjust="spacingAndGlyphs">Product Category</text>
<path d="M58.3 448.4H158.4" stroke="#9dc3e6" stroke-width="1.2"/>
<path d="M147.7 436.6H154.9L152.5 439.6V443.4H150.1V439.6Z" fill="#6e6e6e"/><path d="M151.9 441.2L157.1 446.0M157.1 441.2L151.9 446.0" stroke="#e8683a" stroke-width="1" fill="none"/>
<rect x="58.3" y="451.2" width="100.6" height="13.6" rx="2" fill="#bdd7ee" stroke="#8ea9c9" stroke-width="0.8"/>
<text x="63.7" y="460.6" font-size="7.8" fill="#222">Accessories</text>
<rect x="58.3" y="467.6" width="100.6" height="13.6" rx="2" fill="#fff" stroke="#e2e2e2" stroke-width="0.8"/>
<text x="63.7" y="477.0" font-size="7.8" fill="#9a9a9a">Bikes</text>
<rect x="58.3" y="484.1" width="100.6" height="13.6" rx="2" fill="#fff" stroke="#e2e2e2" stroke-width="0.8"/>
<text x="63.7" y="493.5" font-size="7.8" fill="#9a9a9a">Clothing</text>
<rect x="162.8" y="432.8" width="111.1" height="87.2" fill="#fff"/>
<rect x="162.8" y="432.8" width="111.1" height="87.2" fill="none" stroke="#5b9bd5" stroke-width="0.9"/>
<text x="168.5" y="443.1" font-size="7.4" font-weight="bold" fill="#1f1f1f" textLength="44.6" lengthAdjust="spacingAndGlyphs">Sub Category</text>
<path d="M168.2 448.4H267.8" stroke="#9dc3e6" stroke-width="1.2"/>
<path d="M257.1 436.6H264.3L261.9 439.6V443.4H259.5V439.6Z" fill="#6e6e6e"/><path d="M261.3 441.2L266.5 446.0M266.5 441.2L261.3 446.0" stroke="#e8683a" stroke-width="1" fill="none"/>
<rect x="168.2" y="451.2" width="87.4" height="13.6" rx="2" fill="#fff" stroke="#cfcfcf" stroke-width="0.8"/>
<text x="173.6" y="460.6" font-size="7.8" fill="#222">Bike Racks</text>
<rect x="168.2" y="467.6" width="87.4" height="13.6" rx="2" fill="#bdd7ee" stroke="#8ea9c9" stroke-width="0.8"/>
<text x="173.6" y="477.0" font-size="7.8" fill="#222">Bike Stands</text>
<rect x="168.2" y="484.1" width="87.4" height="13.6" rx="2" fill="#fff" stroke="#cfcfcf" stroke-width="0.8"/>
<text x="173.6" y="493.5" font-size="7.8" fill="#222">Bottles and Cages</text>
<rect x="168.2" y="500.5" width="87.4" height="13.6" rx="2" fill="#fff" stroke="#cfcfcf" stroke-width="0.8"/>
<text x="173.6" y="509.9" font-size="7.8" fill="#222">Cleaners</text>
<rect x="258" y="451.2" width="10.3" height="80" fill="#f1f1f1"/>
<rect x="258" y="461.3" width="10.3" height="70" fill="#c1c1c1"/>
<path d="M260.5 457.4L263.1 454.6L265.8 457.4" stroke="#444" stroke-width="1.2" fill="none"/>
<rect x="273.9" y="432.8" width="110.6" height="87.2" fill="#fff"/>
<rect x="273.9" y="432.8" width="110.6" height="87.2" fill="none" stroke="#5b9bd5" stroke-width="0.9"/>
<text x="279.6" y="443.1" font-size="7.4" font-weight="bold" fill="#1f1f1f" textLength="36" lengthAdjust="spacingAndGlyphs">Frame Size</text>
<path d="M279.3 448.4H378.5" stroke="#9dc3e6" stroke-width="1.2"/>
<path d="M367.8 436.6H375.0L372.6 439.6V443.4H370.2V439.6Z" fill="#cfcfcf"/><path d="M372.0 441.2L377.2 446.0M377.2 441.2L372.0 446.0" stroke="#d9d9d9" stroke-width="1" fill="none"/>
<rect x="279.3" y="451.2" width="87.4" height="13.6" rx="2" fill="#bdd7ee" stroke="#8ea9c9" stroke-width="0.8"/>
<rect x="279.3" y="467.6" width="87.4" height="13.6" rx="2" fill="#ddebf7" stroke="#c5d9ee" stroke-width="0.8"/>
<text x="284.7" y="477.0" font-size="7.8" fill="#9a9a9a">38</text>
<rect x="279.3" y="484.1" width="87.4" height="13.6" rx="2" fill="#ddebf7" stroke="#c5d9ee" stroke-width="0.8"/>
<text x="284.7" y="493.5" font-size="7.8" fill="#9a9a9a">40</text>
<rect x="279.3" y="500.5" width="87.4" height="13.6" rx="2" fill="#ddebf7" stroke="#c5d9ee" stroke-width="0.8"/>
<text x="284.7" y="509.9" font-size="7.8" fill="#9a9a9a">42</text>
<rect x="369" y="451.2" width="10.0" height="80" fill="#f1f1f1"/>
<rect x="369" y="461.3" width="10.0" height="70" fill="#c1c1c1"/>
<path d="M371.4 457.4L374.0 454.6L376.6 457.4" stroke="#444" stroke-width="1.2" fill="none"/>
<rect x="384.5" y="433.4" width="111.1" height="86.6" fill="#fff"/>
<rect x="384.5" y="433.4" width="111.1" height="86.6" fill="none" stroke="#5b9bd5" stroke-width="0.9"/>
<text x="390.7" y="443.1" font-size="7.4" font-weight="bold" fill="#1f1f1f" textLength="15.6" lengthAdjust="spacingAndGlyphs">Year</text>
<path d="M390.4 448.4H490.2" stroke="#9dc3e6" stroke-width="1.2"/>
<path d="M479.5 436.6H486.7L484.3 439.6V443.4H481.9V439.6Z" fill="#6e6e6e"/><path d="M483.7 441.2L488.9 446.0M488.9 441.2L483.7 446.0" stroke="#e8683a" stroke-width="1" fill="none"/>
<rect x="390.4" y="451.2" width="100.3" height="13.6" rx="2" fill="#fff" stroke="#cfcfcf" stroke-width="0.8"/>
<text x="395.8" y="460.6" font-size="7.8" fill="#222">2013</text>
<rect x="390.4" y="467.6" width="100.3" height="13.6" rx="2" fill="#bdd7ee" stroke="#8ea9c9" stroke-width="0.8"/>
<text x="395.8" y="477.0" font-size="7.8" fill="#222">2014</text>
<rect x="390.4" y="484.1" width="100.3" height="13.6" rx="2" fill="#fff" stroke="#cfcfcf" stroke-width="0.8"/>
<text x="395.8" y="493.5" font-size="7.8" fill="#222">2015</text>
<rect x="390.4" y="500.5" width="100.3" height="13.6" rx="2" fill="#fff" stroke="#cfcfcf" stroke-width="0.8"/>
<text x="395.8" y="509.9" font-size="7.8" fill="#222">2016</text>
<rect x="164" y="279.8" width="109.5" height="153.0" fill="#fff"/>
<rect x="164" y="279.8" width="109.5" height="153.0" fill="none" stroke="#5b9bd5" stroke-width="0.9"/>
<text x="168.6" y="290.6" font-size="7.4" font-weight="bold" fill="#1f1f1f" textLength="61.2" lengthAdjust="spacingAndGlyphs">Customer Gender</text>
<path d="M168.3 295.9H267.2" stroke="#9dc3e6" stroke-width="1.2"/>
<path d="M256.5 284.1H263.7L261.3 287.1V290.9H258.9V287.1Z" fill="#cfcfcf"/><path d="M260.7 288.7L265.9 293.5M265.9 288.7L260.7 293.5" stroke="#d9d9d9" stroke-width="1" fill="none"/>
<rect x="168.3" y="298.7" width="99.4" height="13.6" rx="2" fill="#bdd7ee" stroke="#8ea9c9" stroke-width="0.8"/>
<text x="173.7" y="308.1" font-size="7.8" fill="#222">F</text>
<rect x="168.3" y="315.1" width="99.4" height="13.6" rx="2" fill="#bdd7ee" stroke="#8ea9c9" stroke-width="0.8"/>
<text x="173.7" y="324.5" font-size="7.8" fill="#222">M</text>
<rect x="273.5" y="280" width="110.2" height="152.8" fill="#fff"/>
<rect x="273.5" y="280" width="110.2" height="152.8" fill="none" stroke="#5b9bd5" stroke-width="0.9"/>
<text x="278.5" y="290.6" font-size="7.4" font-weight="bold" fill="#1f1f1f" textLength="27.6" lengthAdjust="spacingAndGlyphs">Country</text>
<path d="M278.2 295.9H378.3" stroke="#9dc3e6" stroke-width="1.2"/>
<path d="M367.6 284.1H374.8L372.4 287.1V290.9H370.0V287.1Z" fill="#6e6e6e"/><path d="M371.8 288.7L377.0 293.5M377.0 288.7L371.8 293.5" stroke="#e8683a" stroke-width="1" fill="none"/>
<rect x="278.2" y="298.7" width="100.6" height="13.6" rx="2" fill="#fff" stroke="#cfcfcf" stroke-width="0.8"/>
<text x="283.6" y="308.1" font-size="7.8" fill="#222">Australia</text>
<rect x="278.2" y="315.1" width="100.6" height="13.6" rx="2" fill="#fff" stroke="#cfcfcf" stroke-width="0.8"/>
<text x="283.6" y="324.5" font-size="7.8" fill="#222">Canada</text>
<rect x="278.2" y="331.6" width="100.6" height="13.6" rx="2" fill="#fff" stroke="#cfcfcf" stroke-width="0.8"/>
<text x="283.6" y="341.0" font-size="7.8" fill="#222">France</text>
<rect x="278.2" y="348.0" width="100.6" height="13.6" rx="2" fill="#bdd7ee" stroke="#8ea9c9" stroke-width="0.8"/>
<text x="283.6" y="357.4" font-size="7.8" fill="#222">Germany</text>
<rect x="278.2" y="364.5" width="100.6" height="13.6" rx="2" fill="#fff" stroke="#cfcfcf" stroke-width="0.8"/>
<text x="283.6" y="373.9" font-size="7.8" fill="#222">United Kingdom</text>
<rect x="278.2" y="380.9" width="100.6" height="13.6" rx="2" fill="#fff" stroke="#cfcfcf" stroke-width="0.8"/>
<text x="283.6" y="390.3" font-size="7.8" fill="#222">United States</text>
<rect x="52.7" y="279.4" width="111.3" height="153.3" fill="#fff"/>
<text x="58.8" y="290.5" font-size="7.4" font-weight="bold" fill="#1f1f1f" textLength="36.6" lengthAdjust="spacingAndGlyphs">Age Group</text>
<path d="M58.5 295.8H158.0" stroke="#9dc3e6" stroke-width="1.2"/>
<path d="M147.3 284.0H154.5L152.1 287.0V290.8H149.7V287.0Z" fill="#6e6e6e"/><path d="M151.5 288.6L156.7 293.4M156.7 288.6L151.5 293.4" stroke="#e8683a" stroke-width="1" fill="none"/>
<rect x="58.5" y="298.6" width="100.0" height="13.6" rx="2" fill="#fff" stroke="#cfcfcf" stroke-width="0.8"/>
<text x="63.9" y="308.0" font-size="7.8" fill="#222">Adults (35-64)</text>
<rect x="58.5" y="315.0" width="100.0" height="13.6" rx="2" fill="#bdd7ee" stroke="#8ea9c9" stroke-width="0.8"/>
<text x="63.9" y="324.4" font-size="7.8" fill="#222">Seniors (64+)</text>
<rect x="58.5" y="331.5" width="100.0" height="13.6" rx="2" fill="#fff" stroke="#cfcfcf" stroke-width="0.8"/>
<text x="63.9" y="340.9" font-size="7.8" fill="#222">Young Adults (25-34)</text>
<rect x="58.5" y="347.9" width="100.0" height="13.6" rx="2" fill="#fff" stroke="#cfcfcf" stroke-width="0.8"/>
<text x="63.9" y="357.3" font-size="7.8" fill="#222">Youth (&lt;25)</text>
<rect x="52.7" y="279.4" width="111.3" height="153.3" fill="none" stroke="#bdbdbd" stroke-width="2.6"/>
<rect x="52.7" y="279.4" width="111.3" height="153.3" fill="none" stroke="#fff" stroke-width="1.2"/>
<rect x="50.5" y="277.2" width="4.4" height="4.4" rx="0.8" fill="#fff" stroke="#b0b0b0" stroke-width="0.7"/>
<rect x="50.5" y="353.8" width="4.4" height="4.4" rx="0.8" fill="#fff" stroke="#b0b0b0" stroke-width="0.7"/>
<rect x="50.5" y="430.5" width="4.4" height="4.4" rx="0.8" fill="#fff" stroke="#b0b0b0" stroke-width="0.7"/>
<rect x="106.1" y="277.2" width="4.4" height="4.4" rx="0.8" fill="#fff" stroke="#b0b0b0" stroke-width="0.7"/>
<rect x="106.1" y="430.5" width="4.4" height="4.4" rx="0.8" fill="#fff" stroke="#b0b0b0" stroke-width="0.7"/>
<rect x="161.8" y="277.2" width="4.4" height="4.4" rx="0.8" fill="#fff" stroke="#b0b0b0" stroke-width="0.7"/>
<rect x="161.8" y="353.8" width="4.4" height="4.4" rx="0.8" fill="#fff" stroke="#b0b0b0" stroke-width="0.7"/>
<rect x="161.8" y="430.5" width="4.4" height="4.4" rx="0.8" fill="#fff" stroke="#b0b0b0" stroke-width="0.7"/>
</svg>
<!--SCROLLBARS-->
<div class="a" style="left:1008.5px;top:140px;width:16px;height:368px;background:#fff"></div><div class="a" style="left:1010px;top:153px;width:14px;height:355px;background:#f1f1f1"></div>
<div class="a" style="left:1011px;top:143.5px;width:11.5px;height:9.5px;background:#fff;border:1px solid #c2c2c2"></div>
<div class="a" style="left:1010.5px;top:194.5px;width:12.5px;height:302px;background:#fff;border:1px solid #c2c2c2"></div>
<div class="a" style="left:1011px;top:498.5px;width:11.5px;height:8.5px;background:#fff;border:1px solid #c2c2c2"></div>
<svg class="a" style="left:1009px;top:140px" width="15" height="368" viewBox="1009 140 15 368"><path d="M1014.4 149.6H1019.2L1016.8 147Z" fill="#666"/><path d="M1014.4 501.4H1019.2L1016.8 504Z" fill="#666"/></svg>

<!--SHEETBAR-->
<div id="sheetbar" class="a">
<div class="a" style="left:0;top:0;width:1024px;height:1px;background:#c8c8c8"></div>
<div class="a" style="left:157px;top:0;width:67.5px;height:18.5px;background:#fff;border-bottom:1.6px solid #217346;border-left:1px solid #c8c8c8;border-right:1px solid #c8c8c8"></div>
<div class="a" style="left:75.5px;top:4px;width:1px;height:14px;background:#bdbdbd"></div>
<div class="a" style="left:115.5px;top:4px;width:1px;height:14px;background:#bdbdbd"></div>
<div class="t" style="left:84.5px;top:4.2px;font-size:10.8px;color:#444;transform:scaleX(.9);transform-origin:0 0">Data</div>
<div class="t" style="left:124.5px;top:4.2px;font-size:10.8px;color:#444;transform:scaleX(.9);transform-origin:0 0">Pivot</div>
<div class="t" style="left:166.5px;top:4.2px;font-size:10.4px;color:#217346;font-weight:bold;transform:scaleX(.915);transform-origin:0 0">Dashboard</div>
<svg class="a" style="left:0;top:0" width="1024" height="20" viewBox="0 508 1024 20">
<path d="M23.4 515.6V520.4L20.6 518Z" fill="#c6c6c6"/><path d="M42.6 515.6V520.4L45.4 518Z" fill="#c6c6c6"/>
<circle cx="255.4" cy="517.8" r="4.9" fill="#f6f6f6" stroke="#777" stroke-width="0.9"/><path d="M252.6 517.8H258.2M255.4 515V520.6" stroke="#666" stroke-width="1"/>
<path d="M614.6 513.6v1.2M614.6 517v1.2M614.6 520.4v1.2" stroke="#999" stroke-width="1"/>
<rect x="628" y="513.6" width="10" height="10" fill="#fff" stroke="#c2c2c2" stroke-width="0.9"/><path d="M634.4 516.2V521L631.8 518.6Z" fill="#555"/>
<rect x="638" y="513.6" width="321.3" height="10" fill="#fff" stroke="#c2c2c2" stroke-width="0.9"/>
<rect x="997.5" y="513.6" width="10" height="10" fill="#fff" stroke="#c2c2c2" stroke-width="0.9"/><path d="M1001.4 516.2V521L1004 518.6Z" fill="#555"/>
</svg>
</div>

<!--STATUS-->
<div id="status" class="a">
<div class="t" style="left:5.5px;top:4.4px;font-size:8.8px;color:#fff;transform:scaleX(.8);transform-origin:0 0">READY</div>
<div class="a" style="left:810px;top:0;width:28px;height:17px;background:#1a5c38"></div>
<svg class="a" style="left:800px;top:0" width="224" height="17" viewBox="800 528 224 17">
<rect x="818.4" y="531.8" width="10.4" height="9.8" fill="none" stroke="#e6efe9" stroke-width="0.9"/><path d="M821.9 531.8V541.6M825.3 531.8V541.6M818.4 535.1H828.8M818.4 538.3H828.8" stroke="#e6efe9" stroke-width="0.8"/>
<rect x="847.4" y="531.8" width="10.4" height="9.8" fill="none" stroke="#fff" stroke-width="0.9"/><rect x="850" y="534" width="5.2" height="5.4" fill="none" stroke="#fff" stroke-width="0.8"/><path d="M851.4 536.6H854" stroke="#fff" stroke-width="0.8"/>
<rect x="875.8" y="531.8" width="10.4" height="9.8" fill="none" stroke="#fff" stroke-width="0.9"/><rect x="879" y="531.8" width="4.2" height="5.2" fill="#fff"/><path d="M875.8 537.6H886.2" stroke="#fff" stroke-width="0.8"/>
<path d="M899.8 536.8H903.2" stroke="#fff" stroke-width="1.3"/>
<path d="M906 536.8H981" stroke="#fff" stroke-width="0.7"/><path d="M944 535V538.6" stroke="#fff" stroke-width="0.7"/>
<rect x="933.4" y="532.2" width="2.6" height="9" fill="#fff"/>
<path d="M984.4 536.8H990M987.2 534V539.6" stroke="#fff" stroke-width="1.3"/>
</svg>
<div class="t" style="left:1001.5px;top:4.5px;font-size:8.6px;color:#fff;letter-spacing:-0.2px">77%</div>
</div>

<!--TASK-->
<div id="task" class="a">
<div class="a" style="left:293px;top:0;width:34.5px;height:30px;background:#3f4a44"></div>
<div class="a" style="left:293px;top:28px;width:34.5px;height:2px;background:#76b9ed"></div>
<div class="a" style="left:443px;top:28px;width:30px;height:2px;background:#76b9ed"></div>
<div class="a" style="left:480px;top:28px;width:30px;height:2px;background:#76b9ed"></div>
<svg class="a" style="left:0;top:0" width="1024" height="30" viewBox="0 545 1024 30" font-family="Liberation Sans, sans-serif">
<!-- start -->
<path d="M11.8 555.4L17 554.7V559.4H11.8ZM17.9 554.6L24.6 553.7V559.4H17.9ZM11.8 560.3H17V565L11.8 564.3ZM17.9 560.3H24.6V566L17.9 565.1Z" fill="#fff"/>
<!-- search -->
<circle cx="55.4" cy="558.2" r="3.9" fill="none" stroke="#fff" stroke-width="1.4"/><path d="M52.6 561L48.6 565.4" stroke="#fff" stroke-width="1.6"/>
<!-- cortana -->
<circle cx="89.6" cy="559.9" r="5" fill="none" stroke="#fff" stroke-width="1.7"/>
<!-- task view -->
<rect x="121.6" y="556.8" width="6.6" height="6.2" fill="none" stroke="#fff" stroke-width="1.1"/><path d="M120.4 555.2H129M120.4 564.8H129M131.4 555V558M131.4 561V565" stroke="#fff" stroke-width="1.1"/>
<!-- chrome -->
<circle cx="163.8" cy="559.7" r="8.4" fill="#e33b2e"/>
<path d="M163.8 559.7L156.5 555.5A8.4 8.4 0 0 0 159.6 567Z" fill="#2da94f"/>
<path d="M163.8 559.7L159.6 567A8.4 8.4 0 0 0 172.2 559.7Z" fill="#fcc934"/>
<path d="M163.8 559.7L159.6 567A8.4 8.4 0 0 0 168 566.97L163.8 559.7Z" fill="#2da94f"/>
<path d="M163.8 559.7H172.2A8.4 8.4 0 0 1 168 566.97Z" fill="#fcc934"/>
<circle cx="163.8" cy="559.7" r="4" fill="#fff"/><circle cx="163.8" cy="559.7" r="3.1" fill="#4a8af4"/>
<!-- mail -->
<path d="M192 556.8L200.6 552.6L209.2 556.8V565.6H192Z" fill="#fff"/><path d="M192.6 557.2L200.6 562.4L208.6 557.2" fill="none" stroke="#1d2420" stroke-width="1.5"/>
<circle cx="210" cy="565.2" r="4.8" fill="#2c2f2d" stroke="#9a9a9a" stroke-width="0.9"/><text x="210" y="567.6" text-anchor="middle" font-size="7" font-weight="bold" fill="#fff">2</text>
<!-- explorer -->
<path d="M229.8 554H236L237.4 555.6H245.8V566H229.8Z" fill="#f6c445"/><rect x="229.8" y="556.6" width="16" height="9.4" fill="#fad366"/><rect x="233" y="560" width="9.6" height="3.2" fill="#3a8ee6"/><rect x="234.6" y="563" width="6.4" height="3" fill="#2a6fc2"/><rect x="236.2" y="564" width="3.2" height="2" fill="#fad366"/>
<!-- computer -->
<path d="M271.6 552.6L283 555.4V564L271.6 561.4Z" fill="#3aa0f0"/><path d="M267 564.6L275 562.6L281.4 565L273.2 567.4Z" fill="#e6e6e6"/><path d="M272 561.6L276 562.6" stroke="#bbb" stroke-width="0.8"/>
<!-- excel -->
<path d="M302.4 554.6L311 553V567L302.4 565.4Z" fill="#1e7145"/><rect x="311" y="554.6" width="8.4" height="10.8" fill="#fff" stroke="#1e7145" stroke-width="0.9"/><path d="M311 558.2H319.4M311 561.8H319.4M315.2 554.6V565.4" stroke="#1e7145" stroke-width="0.8"/><path d="M304.6 557.2L308.8 562.8M308.8 557.2L304.6 562.8" stroke="#fff" stroke-width="1.3"/>
<!-- word -->
<path d="M339 554.6L347.6 553V567L339 565.4Z" fill="#2b579a"/><rect x="347.6" y="554.6" width="8.4" height="10.8" fill="#fff" stroke="#2b579a" stroke-width="0.9"/><path d="M349 557H354.6M349 559H354.6M349 561H354.6M349 563H354.6" stroke="#2b579a" stroke-width="0.8"/><text x="343.3" y="562.6" text-anchor="middle" font-size="6.6" font-weight="bold" fill="#fff">W</text>
<!-- colored -->
<rect x="377" y="551.6" width="7.4" height="7.6" fill="#d8342e"/><rect x="385" y="551.6" width="7" height="7.6" fill="#5bb531"/><rect x="377" y="560" width="7.4" height="7.8" fill="#c9b82c"/><rect x="385" y="560" width="7" height="7.8" fill="#5a2ca0"/>
<!-- dev -->
<rect x="413" y="551.6" width="16.4" height="16" fill="#2b5fae"/><text x="421.2" y="558.8" text-anchor="middle" font-size="6.4" font-weight="bold" fill="#fff">DEV</text><path d="M416 563H426.4" stroke="#1c3f7a" stroke-width="2.6"/><path d="M417 563H420M422 563H425.4" stroke="#4fa3e8" stroke-width="1.2"/>
<!-- chrome 2 -->
<circle cx="458" cy="559.6" r="8.4" fill="#e33b2e"/>
<path d="M458 559.6L450.7 555.4A8.4 8.4 0 0 0 453.8 566.9Z" fill="#2da94f"/>
<path d="M458 559.6L453.8 566.9A8.4 8.4 0 0 0 466.4 559.6Z" fill="#fcc934"/>
<path d="M458 559.6L453.8 566.9A8.4 8.4 0 0 0 462.2 566.87Z" fill="#2da94f"/>
<circle cx="458" cy="559.6" r="4" fill="#fff"/><circle cx="458" cy="559.6" r="3.1" fill="#4a8af4"/>
<circle cx="462.4" cy="564" r="4.6" fill="#2da94f"/><circle cx="462.4" cy="564" r="3.4" fill="#e8334a"/>
<!-- paint -->
<ellipse cx="493" cy="561" rx="8" ry="6" fill="#d9dfe6" transform="rotate(-20 493 561)"/><circle cx="489.4" cy="559.6" r="1.3" fill="#e33b2e"/><circle cx="493" cy="557.6" r="1.3" fill="#3a8ee6"/><circle cx="489.6" cy="563.4" r="1.3" fill="#2da94f"/><circle cx="494" cy="565" r="1.6" fill="#1d2420"/><path d="M496 565.4L502.6 552.6" stroke="#c98a3c" stroke-width="1.6"/><path d="M502 553.4L503.4 551" stroke="#eee" stroke-width="1.6"/>
<!-- tray -->
<path d="M869.4 562.2L873.4 558.2L877.4 562.2" fill="none" stroke="#fff" stroke-width="1.2"/>
<rect x="888.2" y="558.2" width="9" height="4.8" fill="none" stroke="#fff" stroke-width="1"/><path d="M897.8 559.8V561.4" stroke="#fff" stroke-width="1"/><rect x="885.8" y="555.6" width="3.6" height="3" fill="#1d2420" stroke="#fff" stroke-width="0.8"/><path d="M887.6 558.6V560.6H888.4" stroke="#fff" stroke-width="0.8" fill="none"/><rect x="889.6" y="559.4" width="3.4" height="2.4" fill="#fff"/>
<path d="M915.4 560.2C915.4 559.6 914.6 559.2 913.8 559.2H911.2L908.4 554.6H907L908.2 559.2H905.4L904.2 557.6H903.2L903.8 560.2L903.2 562.8H904.2L905.4 561.2H908.2L907 565.8H908.4L911.2 561.2H913.8C914.6 561.2 915.4 560.8 915.4 560.2Z" fill="none" stroke="#fff" stroke-width="0.8" stroke-linejoin="round"/>
<path d="M921.6 558.4H923.6L926.4 555.8V564.8L923.6 562.2H921.6Z" fill="none" stroke="#fff" stroke-width="0.9"/><path d="M928 558.6C928.8 559.6 928.8 561 928 562M929.6 557C931.2 558.8 931.2 561.8 929.6 563.6" fill="none" stroke="#fff" stroke-width="0.8"/><path d="M931.4 555.6C933.6 558.2 933.6 562.4 931.4 565" fill="none" stroke="#6a6a6a" stroke-width="0.8"/>
<text x="944.6" y="556.4" font-size="9.4" fill="#fff" textLength="31" lengthAdjust="spacingAndGlyphs">6:43 PM</text>
<text x="943.3" y="569.6" font-size="9.4" fill="#fff" textLength="34.5" lengthAdjust="spacingAndGlyphs">3/8/2020</text>
<path d="M993.4 554.4H1005V562.2H998.4L995.8 564.8V562.2H993.4Z" fill="#fff"/><path d="M995.4 556.6H1003M995.4 558.4H1003M995.4 560.2H1003" stroke="#1d2420" stroke-width="0.7"/>
<circle cx="1005" cy="565.4" r="4.6" fill="#1d2420" stroke="#bbb" stroke-width="0.8"/><text x="1005" y="568" text-anchor="middle" font-size="7" fill="#fff">1</text>
<path d="M1020.4 545V575" stroke="#5a5f5c" stroke-width="0.8"/>
</svg>
</div>

<!--DIALOG-->
<div class="a" style="left:483.5px;top:217px;width:254.5px;height:144.3px;background:#f0f0f0;border:1px solid #8c8c8c;box-shadow:0 2px 8px rgba(0,0,0,0.4)"></div>
<div class="a" style="left:484.5px;top:218px;width:252.5px;height:22.5px;background:#fff"></div>
<div class="t" style="left:489.5px;top:224px;font-size:9.4px;color:#222;transform:scaleX(.94);transform-origin:0 0">Report Connections (Age Group)</div>
<div class="t" style="left:684.6px;top:222.6px;font-size:10.6px;color:#222">?</div>
<svg class="a" style="left:714px;top:222px" width="14" height="14" viewBox="714 222 14 14"><path d="M717.4 225L725.2 232.8M725.2 225L717.4 232.8" stroke="#333" stroke-width="1"/></svg>
<div class="t" style="left:489px;top:246.5px;font-size:8.8px;color:#111">Select PivotTable and PivotChart reports to connect to this filter</div>
<div class="a" style="left:488.5px;top:257.5px;width:245.5px;height:78px;background:#fff;border:1px solid #828790"></div>
<div class="a" style="left:527.5px;top:258.5px;width:1px;height:14.5px;background:#e5e5e5"></div>
<div class="a" style="left:633px;top:258.5px;width:1px;height:14.5px;background:#e5e5e5"></div>
<div class="t dl" style="left:530.6px;top:262.4px;font-size:8.8px;color:#111">Name</div>
<div class="t dl" style="left:636.4px;top:262.4px;font-size:8.8px;color:#111">Sheet</div>
<div class="a" style="left:489.8px;top:274px;width:242.2px;height:12.8px;background:#0078d7"></div>
<div class="t dl" style="left:531px;top:275.8px;font-size:8.8px;color:#fff">category</div>
<div class="t dl" style="left:636.4px;top:275.8px;font-size:8.8px;color:#fff">Pivot</div>
<div class="t dl" style="left:531px;top:289.4px;font-size:8.8px;color:#111">country</div>
<div class="t dl" style="left:636.4px;top:289.4px;font-size:8.8px;color:#111">Pivot</div>
<div class="t dl" style="left:531px;top:302.8px;font-size:8.8px;color:#111">customer age</div>
<div class="t dl" style="left:636.4px;top:302.8px;font-size:8.8px;color:#111">Pivot</div>
<div class="t dl" style="left:531px;top:316.2px;font-size:8.8px;color:#111">Frame size</div>
<div class="t dl" style="left:636.4px;top:316.2px;font-size:8.8px;color:#111">Pivot</div>
<svg class="a" style="left:489px;top:273px" width="34" height="56" viewBox="489 273 34 56">
<g><rect x="491.4" y="275.6" width="9" height="9" fill="#fff" stroke="#333" stroke-width="0.9"/></g>
<rect x="491.4" y="289.1" width="9" height="9" fill="#fff" stroke="#333" stroke-width="0.9"/>
<rect x="491.4" y="302.5" width="9" height="9" fill="#fff" stroke="#333" stroke-width="0.9"/>
<rect x="491.4" y="315.9" width="9" height="9" fill="#fff" stroke="#333" stroke-width="0.9"/>
<path d="M493 280L495.2 282.4L499 277.6M493 293.5L495.2 295.9L499 291.1M493 320.3L495.2 322.7L499 317.9" fill="none" stroke="#222" stroke-width="1"/>
<g><rect x="508.4" y="274.9" width="11.3" height="11.1" fill="#fbfbfb" stroke="#9a9a9a" stroke-width="0.8"/><path d="M510.6 276.2V285M511.8 276.6H518.4M513.6 277.8H518.4" stroke="#c4c4c4" stroke-width="0.9"/><path d="M513.2 283.2H515.6V280H518M516.6 278.8L518.2 280L516.6 281.2M514.4 282L512.8 283.2L514.4 284.4" fill="none" stroke="#3b79c4" stroke-width="0.9"/></g><g transform="translate(0,13.5)"><rect x="508.4" y="274.9" width="11.3" height="11.1" fill="#fbfbfb" stroke="#9a9a9a" stroke-width="0.8"/><path d="M510.6 276.2V285M511.8 276.6H518.4M513.6 277.8H518.4" stroke="#c4c4c4" stroke-width="0.9"/><path d="M513.2 283.2H515.6V280H518M516.6 278.8L518.2 280L516.6 281.2M514.4 282L512.8 283.2L514.4 284.4" fill="none" stroke="#3b79c4" stroke-width="0.9"/></g><g transform="translate(0,26.9)"><rect x="508.4" y="274.9" width="11.3" height="11.1" fill="#fbfbfb" stroke="#9a9a9a" stroke-width="0.8"/><path d="M510.6 276.2V285M511.8 276.6H518.4M513.6 277.8H518.4" stroke="#c4c4c4" stroke-width="0.9"/><path d="M513.2 283.2H515.6V280H518M516.6 278.8L518.2 280L516.6 281.2M514.4 282L512.8 283.2L514.4 284.4" fill="none" stroke="#3b79c4" stroke-width="0.9"/></g><g transform="translate(0,40.3)"><rect x="508.4" y="274.9" width="11.3" height="11.1" fill="#fbfbfb" stroke="#9a9a9a" stroke-width="0.8"/><path d="M510.6 276.2V285M511.8 276.6H518.4M513.6 277.8H518.4" stroke="#c4c4c4" stroke-width="0.9"/><path d="M513.2 283.2H515.6V280H518M516.6 278.8L518.2 280L516.6 281.2M514.4 282L512.8 283.2L514.4 284.4" fill="none" stroke="#3b79c4" stroke-width="0.9"/></g>

</svg>
<div class="a" style="left:615.5px;top:339.3px;width:54.5px;height:15.2px;background:#e1e1e1;border:1.5px solid #0078d7"></div>
<div class="t" style="left:615.5px;width:54.5px;text-align:center;top:342.6px;font-size:8.8px;color:#111">OK</div>
<div class="a" style="left:678.3px;top:339.3px;width:54.5px;height:15.2px;background:#e1e1e1;border:1px solid #adadad"></div>
<div class="t" style="left:678.3px;width:54.5px;text-align:center;top:342.6px;font-size:8.8px;color:#111">Cancel</div>
<svg class="a" style="left:728px;top:351px" width="9" height="9" viewBox="0 0 9 9"><path d="M7 1.6v1M7 4v1M7 6.4v1M4.6 4v1M4.6 6.4v1M2.2 6.4v1" stroke="#a8a8a8" stroke-width="1"/></svg>

</body></html>
